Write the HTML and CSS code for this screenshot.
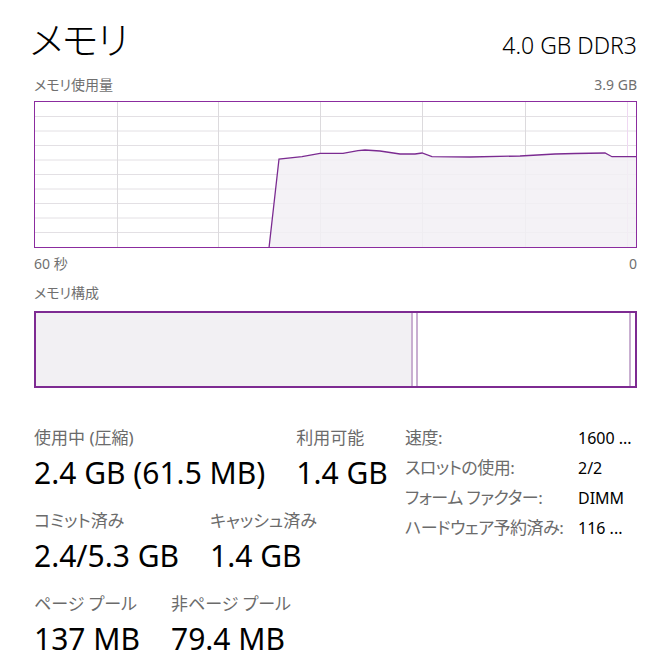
FILE: index.html
```html
<!DOCTYPE html>
<html lang="ja">
<head>
<meta charset="utf-8">
<title>メモリ</title>
<link rel="stylesheet" href="styles.css">
</head>
<body>
<main class="page">
  <header class="head">
    <h1 class="title">メモリ</h1>
    <div class="spec">4.0 GB DDR3</div>
  </header>

  <div class="cap-row cap-top">
    <span>メモリ使用量</span>
    <span>3.9 GB</span>
  </div>

  <div class="graph">
    <svg class="graph-svg" width="601" height="145" viewBox="0 0 601 145" xmlns="http://www.w3.org/2000/svg">
      <g class="grid-h">
        <line x1="0" y1="14.5" x2="601" y2="14.5"/>
        <line x1="0" y1="29" x2="601" y2="29"/>
        <line x1="0" y1="43.5" x2="601" y2="43.5"/>
        <line x1="0" y1="58" x2="601" y2="58"/>
        <line x1="0" y1="72.5" x2="601" y2="72.5"/>
        <line x1="0" y1="87" x2="601" y2="87"/>
        <line x1="0" y1="101.5" x2="601" y2="101.5"/>
        <line x1="0" y1="116" x2="601" y2="116"/>
        <line x1="0" y1="130.5" x2="601" y2="130.5"/>
      </g>
      <g class="grid-v">
        <line x1="82.5" y1="0" x2="82.5" y2="145"/>
        <line x1="183.5" y1="0" x2="183.5" y2="145"/>
        <line x1="285.5" y1="0" x2="285.5" y2="145"/>
        <line x1="387.5" y1="0" x2="387.5" y2="145"/>
        <line x1="490.5" y1="0" x2="490.5" y2="145"/>
      </g>
      <line class="grid-now" x1="592.5" y1="0" x2="592.5" y2="145"/>
      <polygon class="area" points="234,145 244,57 267,54.7 285,51.3 308,51.3 323,48.7 330,48 345,49 365,52 380,52 387,51 397,54.7 435,55 485,54 520,52 540,51.5 570,51 577,54.7 602,54.7 602,145"/>
      <polyline class="line" points="234,146 244,57 267,54.7 285,51.3 308,51.3 323,48.7 330,48 345,49 365,52 380,52 387,51 397,54.7 435,55 485,54 520,52 540,51.5 570,51 577,54.7 602,54.7"/>
    </svg>
  </div>

  <div class="cap-row cap-axis">
    <span>60 秒</span>
    <span>0</span>
  </div>

  <div class="cap-row cap-comp">
    <span>メモリ構成</span>
  </div>

  <div class="comp">
    <div class="seg seg-used" style="width:377px"></div>
    <div class="seg seg-mod" style="width:5px"></div>
    <div class="seg seg-standby" style="width:213px"></div>
    <div class="seg seg-free"></div>
  </div>

  <section class="stats">
    <div class="stats-left">
      <div class="srow">
        <div class="stat">
          <div class="lbl">使用中 (圧縮)</div>
          <div class="val">2.4 GB (61.5 MB)</div>
        </div>
        <div class="stat">
          <div class="lbl">利用可能</div>
          <div class="val">1.4 GB</div>
        </div>
      </div>
      <div class="srow">
        <div class="stat">
          <div class="lbl">コミット済み</div>
          <div class="val">2.4/5.3 GB</div>
        </div>
        <div class="stat">
          <div class="lbl">キャッシュ済み</div>
          <div class="val">1.4 GB</div>
        </div>
      </div>
      <div class="srow">
        <div class="stat">
          <div class="lbl">ページ プール</div>
          <div class="val">137 MB</div>
        </div>
        <div class="stat">
          <div class="lbl">非ページ プール</div>
          <div class="val">79.4 MB</div>
        </div>
      </div>
    </div>
    <dl class="info">
      <dt>速度:</dt><dd>1600 ...</dd>
      <dt>スロットの使用:</dt><dd>2/2</dd>
      <dt>フォーム ファクター:</dt><dd>DIMM</dd>
      <dt>ハードウェア予約済み:</dt><dd>116 ...</dd>
    </dl>
  </section>
</main>
</body>
</html>
```

FILE: styles.css
```css
html, body {
  margin: 0;
  padding: 0;
  background: #ffffff;
}

body {
  font-family: "Noto Sans", "Noto Sans CJK JP", sans-serif;
  color: #000000;
  font-feature-settings: "palt";
}

.page {
  width: 603px;
  padding: 14px 30px 0 34px;
}

.head {
  display: flex;
  justify-content: space-between;
  align-items: baseline;
  height: 50px;
}

.title {
  margin: 0 0 0 -4px;
  font-size: 38px;
  font-weight: 300;
  line-height: 50px;
  letter-spacing: -1px;
}

.spec {
  font-size: 23px;
  font-weight: 300;
  line-height: 30px;
  color: #000;
}

.cap-row {
  display: flex;
  justify-content: space-between;
  font-size: 14px;
  line-height: 18px;
  color: #707070;
}

.cap-top { margin-top: 12px; }
.cap-axis { margin-top: 7px; }
.cap-comp { margin-top: 11px; }

.graph {
  margin-top: 7px;
  height: 147px;
  box-sizing: border-box;
  border: 1px solid #8b2c9f;
}

.graph-svg {
  display: block;
}

.grid-h line {
  stroke: #e3e0e4;
  stroke-width: 1;
}

.grid-v line {
  stroke: #dcdadd;
  stroke-width: 1;
}

.grid-now {
  stroke: #efd8f2;
  stroke-width: 1;
}

.area {
  fill: #f2f0f4;
  fill-opacity: 0.85;
}

.line {
  fill: none;
  stroke: #7b2b91;
  stroke-width: 1.3;
}

.comp {
  margin-top: 9px;
  height: 77px;
  box-sizing: border-box;
  border: 2px solid #7e2b92;
  display: flex;
}

.seg {
  height: 100%;
  box-sizing: border-box;
  border-right: 2px solid #c9afd1;
}

.seg-used { background: #f2f0f3; }
.seg-mod { background: #ffffff; }
.seg-standby { background: #ffffff; }
.seg-free {
  flex: 1;
  border-right: none;
  background: #ffffff;
}

.stats {
  margin-top: 35px;
  display: grid;
  grid-template-columns: 1fr 232px;
  align-items: start;
}

.stats-left {
  padding-top: 5px;
  display: flex;
  flex-direction: column;
  gap: 20px;
}

.srow {
  display: flex;
  gap: 31px;
}

.stat {
  display: flex;
  flex-direction: column;
  gap: 7px;
}

.lbl {
  font-size: 17px;
  line-height: 20px;
  color: #6b6b6b;
  white-space: nowrap;
}

.val {
  font-size: 30px;
  line-height: 36px;
  color: #000;
  white-space: nowrap;
}

.info {
  margin: 0;
  display: grid;
  grid-template-columns: 173px auto;
  align-content: start;
  font-size: 17px;
  line-height: 30px;
}

.info dt {
  color: #6b6b6b;
  white-space: nowrap;
  letter-spacing: -0.5px;
}

.info dd {
  margin: 0;
  color: #000;
  font-size: 16px;
  white-space: nowrap;
}
```
